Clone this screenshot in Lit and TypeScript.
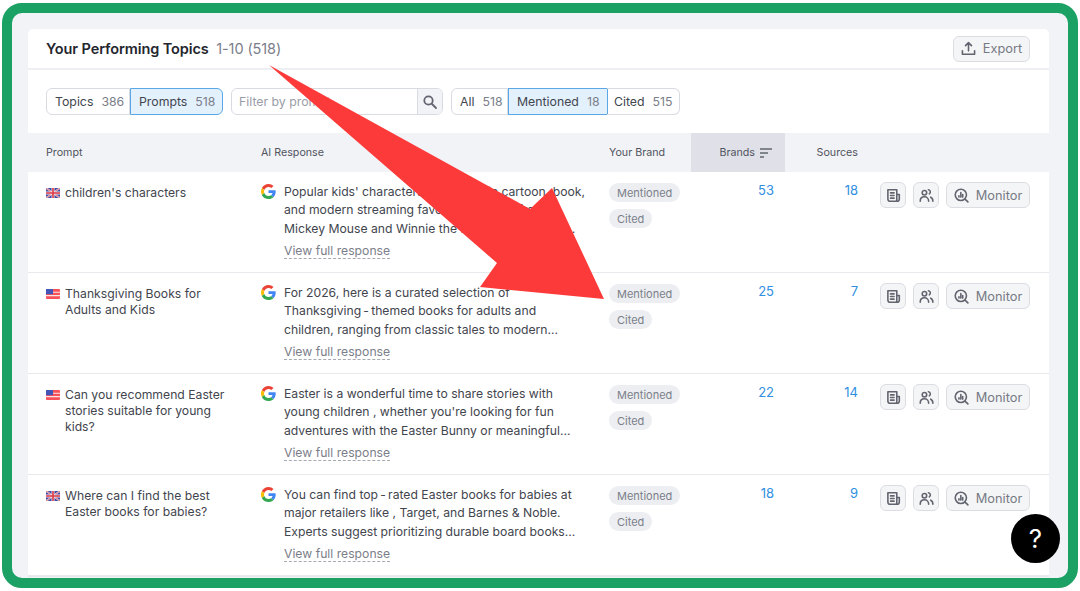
import { LitElement, html, css, svg } from "lit";
import { customElement } from "lit/decorators.js";

const UK = html`<svg class="flag" viewBox="0 0 14 10"><rect width="14" height="10" rx="2" fill="#3c4aa8"/><path d="M0 0 14 10M14 0 0 10" stroke="#e9d3dc" stroke-width="1.800"/><path d="M0 0 14 10M14 0 0 10" stroke="#d8434f" stroke-width=".6"/><path d="M7 0V10M0 5H14" stroke="#efe2e6" stroke-width="3"/><path d="M7 0V10M0 5H14" stroke="#dc3a48" stroke-width="1.600"/></svg>`;
const US = html`<svg class="flag" viewBox="0 0 14 10"><rect width="14" height="10" rx="1" fill="#f7525a"/><path d="M0 3.300H14M0 6.600H14" stroke="#fde4e4" stroke-width="1.100"/><rect width="7" height="5.200" fill="#4455b8"/></svg>`;
const G = html`<svg class="g" viewBox="0 0 48 48"><path fill="#EA4335" d="M24 9.500c3.500 0 6.700 1.200 9.200 3.600l6.900-6.900C35.900 2.400 30.500 0 24 0 14.600 0 6.500 5.400 2.600 13.200l8 6.200C12.500 13.700 17.800 9.500 24 9.500z"/><path fill="#4285F4" d="M47 24.600c0-1.700-.2-3.300-.4-4.900H24v9.100h12.900c-.6 3-2.200 5.500-4.700 7.200l7.700 6c4.500-4.200 7.100-10.300 7.100-17.400z"/><path fill="#FBBC05" d="M10.600 28.600c-.5-1.400-.8-3-.8-4.600s.3-3.200.8-4.600l-8-6.200C.9 16.500 0 20.100 0 24s.9 7.500 2.600 10.800l8-6.200z"/><path fill="#34A853" d="M24 48c6.500 0 11.900-2.100 15.900-5.800l-7.700-6c-2.100 1.400-4.900 2.300-8.200 2.300-6.200 0-11.500-4.200-13.400-9.900l-8 6.200C6.500 42.600 14.600 48 24 48z"/></svg>`;
const ICON = (p: unknown) => html`<svg class="ic" viewBox="0 0 16 16" fill="none" stroke="#62656f" stroke-width="1.700" stroke-linecap="round" stroke-linejoin="round">${p}</svg>`;
const DOC = ICON(svg`<path d="M2 1.800h9.500v12.400H4.500a2.500 2.500 0 0 1-2.500-2.500z"/><path d="M11.500 7H14.200v4.700a2.500 2.500 0 0 1-2.500 2.500H11M4.800 5.200h3.800M4.800 8h3.800M4.800 10.800h3.800"/>`);
const PEOPLE = ICON(svg`<circle cx="5.800" cy="5" r="2.400"/><path d="M1.300 14c0-2.900 2-4.600 4.500-4.600s4.500 1.700 4.500 4.600M10 1.800a2.400 2.400 0 0 1 1 4.400M12.500 9.800c1.400.6 2.300 2.100 2.300 4.200"/>`);
const MON = ICON(svg`<circle cx="7.300" cy="7.300" r="6"/><path d="M11.800 11.800l3 3M5.300 9.700V8.300M7.300 9.700V4.800M9.300 9.700V7"/>`);

const ROWS = [
  { flag: UK, prompt: "children's characters", lines: ["Popular kids' characters span classic cartoon, book,", "and modern streaming favorites ranging from", "Mickey Mouse and Winnie the Pooh to Bluey and…"], brands: 53, sources: 18 },
  { flag: US, prompt: "Thanksgiving Books for Adults and Kids", lines: ["For 2026, here is a curated selection of", "Thanksgiving\u2009-\u2009themed books for adults and", "children, ranging from classic tales to modern…"], brands: 25, sources: 7 },
  { flag: US, prompt: "Can you recommend Easter stories suitable for young kids?", lines: ["Easter is a wonderful time to share stories with", "young children , whether you're looking for fun", "adventures with the Easter Bunny or meaningful…"], brands: 22, sources: 14 },
  { flag: UK, prompt: "Where can I find the best Easter books for babies?", lines: ["You can find top\u2009-\u2009rated Easter books for babies at", "major retailers like , Target, and Barnes & Noble.", "Experts suggest prioritizing durable board books…"], brands: 18, sources: 9 },
];

@customElement("app-root")
export class AppRoot extends LitElement {
  static styles = css`
    :host { display: block; width: 1080px; height: 591px; background: #fff; font-family: Inter, "Liberation Sans", sans-serif; color: #42454e; position: relative; overflow: hidden; }
    * { box-sizing: border-box; }
    .frame { margin: 3px 2px; height: 585px; border: 10px solid #1aa163; border-radius: 20px; background: #f2f3f7; padding: 16px 19px 0 16px; overflow: hidden; }
    .card { background: #fff; border-radius: 5px 5px 0 0; height: 548px; overflow: hidden; border-bottom: 1px solid #e6e7ec; }
    .top { height: 41px; border-bottom: 2px solid #eeeff3; display: flex; align-items: center; justify-content: space-between; padding: 0 19px 0 18px; }
    .title { font-size: 14.500px; font-weight: 600; color: #24262d; letter-spacing: -.1px; }
    .title span { font-weight: 400; color: #7b7e89; margin-left: 4px; }
    .btn { display: inline-flex; align-items: center; justify-content: center; height: 26px; border: 1px solid #dcdde3; border-radius: 6px; background: #f4f5f7; color: #777a84; font-size: 12.800px; gap: 7px; }
    .export { width: 77px; }
    .filters { display: flex; padding: 18px 0 18px 18px; height: 63px; }
    .seg { display: flex; height: 27px; font-size: 12.300px; }
    .seg div { display: flex; align-items: center; border: 1px solid #d9dbe2; border-left: none; padding: 0 8px; gap: 8px; white-space: nowrap; }
    .seg div:first-child { border-left: 1px solid #d9dbe2; border-radius: 6px 0 0 6px; }
    .seg div:last-child { border-radius: 0 6px 6px 0; }
    .seg i { font-style: normal; color: #7b7e89; }
    .seg div.on { background: #e3f1fd; border: 1px solid #5aa6e6; margin-right: -1px; }
    .seg div.on + div { border-left: none; }
    .s1 div:nth-child(1) { width: 84px; } .s1 div:nth-child(2) { width: 93px; }
    .s2 { margin-left: 8px; }
    .s2 div:nth-child(1) { width: 57px; } .s2 div:nth-child(2) { width: 100px; } .s2 div:nth-child(3) { width: 73px; padding-left: 7px; }
    .search { display: flex; height: 27px; margin-left: 9px; width: 212px; border: 1px solid #d9dbe2; border-radius: 6px; font-size: 12.300px; color: #9a9da7; overflow: hidden; }
    .search span { flex: 1; padding: 0 7px; display: flex; align-items: center; }
    .search b { width: 25px; background: #f2f3f6; border-left: 1px solid #d9dbe2; display: flex; align-items: center; justify-content: center; }
    .search svg { width: 16px; height: 16px; }
    .row { display: grid; grid-template-columns: 215px 348px 82px 94px 73px 1fr; padding: 0 19px 0 18px; }
    .head { height: 39px; background: #f2f3f7; font-size: 10.700px; color: #51545e; align-items: center; }
    .head .sorted { background: #dfe0e8; align-self: stretch; display: flex; align-items: center; justify-content: flex-end; padding-right: 13px; gap: 5px; color: #51545e; }
    .head .sorted svg { width: 12px; height: 10px; }
    .head .src { text-align: right; }
    .item { height: 101px; border-bottom: 1px solid #e8e9ed; font-size: 12.200px; padding-top: 11px; }
    .prompt { display: flex; gap: 5px; padding-right: 25px; line-height: 16px; padding-top: 2px; }
    .flag { width: 14px; height: 10px; flex: none; margin-top: 3px; }
    .resp { display: flex; gap: 8px; padding-right: 16px; }
    .g { width: 15px; height: 15px; flex: none; margin-top: 1px; }
    .lines { line-height: 18.400px; white-space: nowrap; }
    .lines a { display: inline-block; color: #7b7e89; line-height: 15px; margin-top: 5px; border-bottom: 1px dashed #a7a9b2; }
    .badges { display: flex; flex-direction: column; align-items: flex-start; gap: 7px; }
    .tag { background: #eceef2; color: #7b7e89; font-size: 11px; height: 19px; border-radius: 10px; padding: 0 8px; display: flex; align-items: center; }
    .num { color: #308fe0; text-align: right; padding-right: 11px; line-height: 14px; font-size: 13px; }
    .src { text-align: right; }
    .num.src { padding-right: 0; }
    .acts { display: flex; gap: 7px; padding-left: 22px; align-self: start; transform: translateY(-1px); }
    .sq { width: 26px; }
    .mon { width: 84px; }
    .ic { width: 15px; height: 15px; }
    .help { position: absolute; left: 1011px; top: 514px; width: 49px; height: 49px; border-radius: 50%; background: #000; color: #fff; display: flex; align-items: center; justify-content: center; font-size: 26px; }
    .arrow { position: absolute; inset: 0; width: 1080px; height: 591px; pointer-events: none; }
  `;
  render() {
    return html`<div class="frame"><div class="card">
      <div class="top"><div class="title">Your Performing Topics <span>1-10 (518)</span></div>
        <div class="btn export"><svg class="ic" viewBox="0 0 16 16" fill="none" stroke="#62656f" stroke-width="1.700" stroke-linecap="round" stroke-linejoin="round"><path d="M8 10.500V2M4.800 5 8 1.800 11.200 5M1.500 10.500v3.700h13v-3.700"/></svg>Export</div></div>
      <div class="filters">
        <div class="seg s1"><div>Topics <i>386</i></div><div class="on">Prompts <i>518</i></div></div>
        <div class="search"><span>Filter by prompt</span><b><svg viewBox="0 0 16 16" fill="none" stroke="#62656f" stroke-width="1.800" stroke-linecap="round"><circle cx="6.500" cy="6.500" r="4.200"/><path d="M10 10l4 4"/></svg></b></div>
        <div class="seg s2"><div>All <i>518</i></div><div class="on">Mentioned <i>18</i></div><div>Cited <i>515</i></div></div>
      </div>
      <div class="row head"><div>Prompt</div><div>AI Response</div><div>Your Brand</div>
        <div class="sorted">Brands <svg viewBox="0 0 12 10" fill="none" stroke="#62656f" stroke-width="1.300"><path d="M0 1H12M0 5H8M0 9H4"/></svg></div>
        <div class="src">Sources</div><div></div></div>
      ${ROWS.map(r => html`<div class="row item">
        <div class="prompt">${r.flag}<span>${r.prompt}</span></div>
        <div class="resp">${G}<div class="lines">${r.lines.map(l => html`${l}<br>`)}<a>View full response</a></div></div>
        <div class="badges"><div class="tag">Mentioned</div><div class="tag">Cited</div></div>
        <div class="num">${r.brands}</div>
        <div class="num src">${r.sources}</div>
        <div class="acts"><div class="btn sq">${DOC}</div><div class="btn sq">${PEOPLE}</div><div class="btn mon">${MON}Monitor</div></div>
      </div>`)}
    </div></div>
    <svg class="arrow" viewBox="0 0 1080 591"><polygon fill="#fd3a3a" points="269,65 530,209 552,188 604,299 480,287 497,263"/></svg>
    <div class="help">?</div>`;
  }
}
